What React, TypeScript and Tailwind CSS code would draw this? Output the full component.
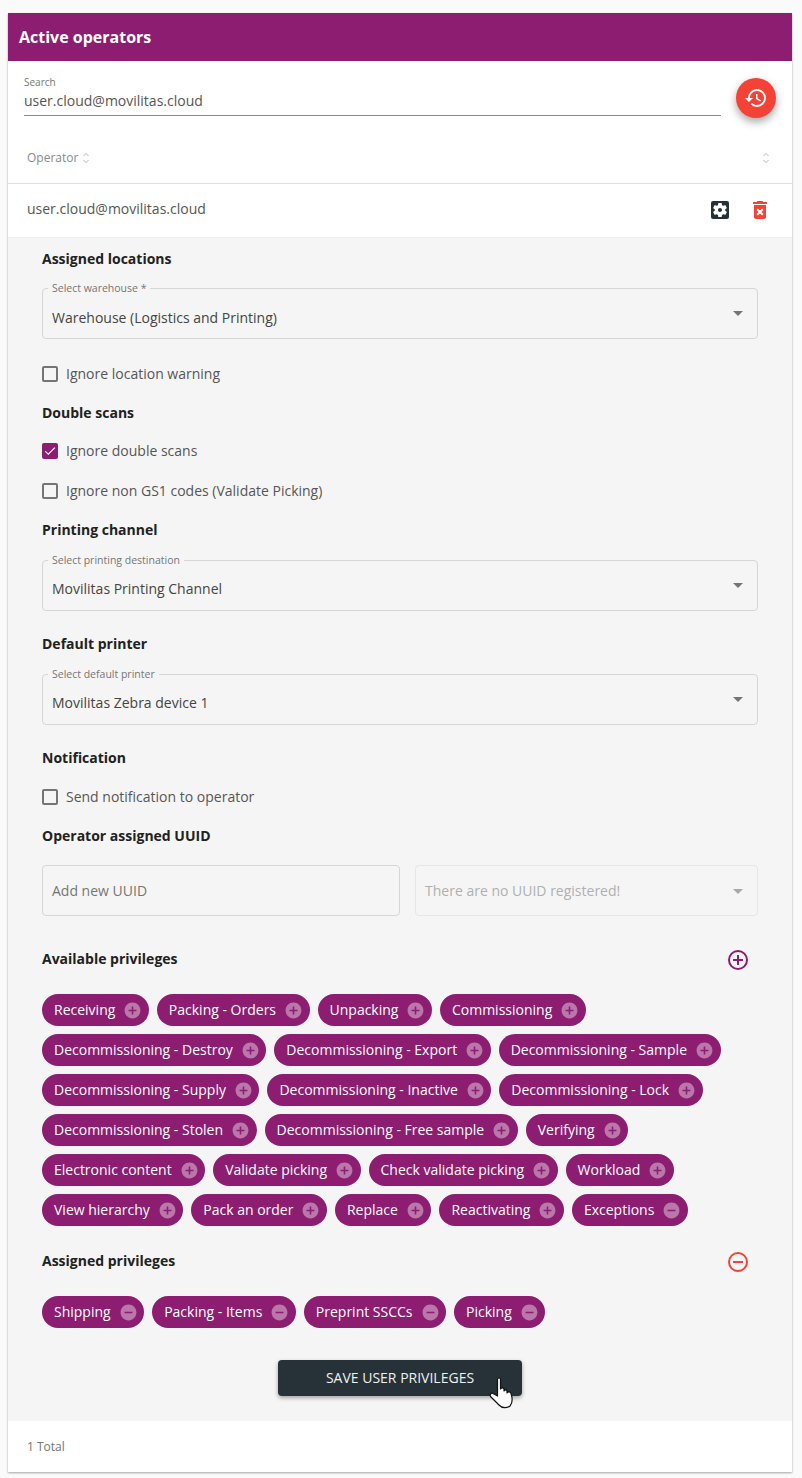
import React from "react";
import { MdAddCircle, MdRemoveCircle, MdSettingsApplications, MdDeleteForever, MdRestore, MdArrowDropDown, MdCheck } from "react-icons/md";

const Heading = ({ children, className = "" }: { children: React.ReactNode; className?: string }) => (
  <h3 className={`text-[14px] leading-[20px] font-bold text-[#212121] ${className}`}>{children}</h3>
);

const Select = ({ label, value, className = "", valueClass = "pt-[7px]" }: { label: string; value: string; className?: string; valueClass?: string }) => (
  <div className={`relative h-[51px] rounded-[4px] border border-[#d6d6d6] flex items-center pl-[9px] pr-[7px] ${className}`}>
    <span className="absolute left-[5px] top-[-8px] bg-[#f5f5f5] px-[4px] text-[10.5px] leading-[14px] text-[#757575]">{label}</span>
    <span className={`flex-1 text-[14px] leading-[20px] text-[#444] ${valueClass}`}>{value}</span>
    <MdArrowDropDown size={24} className="text-[#757575] -mt-[2px]" />
  </div>
);

const Check = ({ label, checked = false, className = "" }: { label: string; checked?: boolean; className?: string }) => (
  <div className={`flex items-center h-[20px] ${className}`}>
    {checked ? (
      <span className="w-[16px] h-[16px] rounded-[2px] bg-[#8c1d71] flex items-center justify-center text-white">
        <MdCheck size={14} />
      </span>
    ) : (
      <span className="w-[16px] h-[16px] rounded-[2px] border-2 border-[#757575]" />
    )}
    <span className="ml-[8px] text-[14px] leading-[20px] text-[#555]">{label}</span>
  </div>
);

const Chip = ({ label, minus = false }: { label: string; minus?: boolean }) => (
  <span className="inline-flex items-center h-[32px] rounded-full bg-[#8c1d71] pl-[12px] pr-[6.5px] text-[14px] text-white">
    <span className="pb-[2px]">{label}</span>
    {minus ? (
      <MdRemoveCircle size={19} className="ml-[8px] text-white/40" />
    ) : (
      <MdAddCircle size={19} className="ml-[8px] text-white/40" />
    )}
  </span>
);

const Sort = () => (
  <svg width="6" height="12" viewBox="0 0 6 12" fill="none" stroke="#b5b5b5" strokeWidth="1">
    <path d="M.5 4 3 1.500 5.500 4M.5 8 3 10.500 5.500 8" />
  </svg>
);

const available = [
  "Receiving", "Packing - Orders", "Unpacking", "Commissioning",
  "Decommissioning - Destroy", "Decommissioning - Export", "Decommissioning - Sample",
  "Decommissioning - Supply", "Decommissioning - Inactive", "Decommissioning - Lock",
  "Decommissioning - Stolen", "Decommissioning - Free sample", "Verifying",
  "Electronic content", "Validate picking", "Check validate picking", "Workload",
  "View hierarchy", "Pack an order", "Replace", "Reactivating", "Exceptions",
];
const assigned = ["Shipping", "Packing - Items", "Preprint SSCCs", "Picking"];

export default function App() {
  return (
    <div className="h-[1478px] bg-[#fafafa] pl-[8px] pr-[10px] pt-[13px] font-['Open_Sans',sans-serif]">
      <div className="bg-white shadow-[0_1px_2px_rgba(0,0,0,0.35)]">
        <header className="h-[48px] bg-[#8c1d71] flex items-center px-[11px] text-[16px] font-bold text-white">Active operators</header>

        <div className="flex items-start pl-[16px] pr-[16px] pt-[14px] h-[71px]">
          <div className="flex-1 border-b border-[#8a8a8a] h-[41px]">
            <div className="text-[10px] leading-[14px] text-[#757575]">Search</div>
            <div className="text-[14px] leading-[20px] text-[#555] mt-[2px]">user.cloud@movilitas.cloud</div>
          </div>
          <button className="w-[40px] h-[40px] ml-[15px] mt-[3px] rounded-full bg-[#f44336] flex items-center justify-center text-white shadow-[0_4px_8px_rgba(0,0,0,0.35)]">
            <MdRestore size={24} />
          </button>
        </div>

        <div className="h-[52px] flex items-center justify-between pl-[19px] pr-[23px] border-b border-[#e0e0e0] text-[12px] text-[#8a8a8a]">
          <span className="flex items-center gap-[5px]">Operator <Sort /></span>
          <Sort />
        </div>

        <div className="h-[53px] flex items-center pl-[19px] pr-[20px] text-[14px] text-[#555]">
          <span className="flex-1 -mt-[5px]">user.cloud@movilitas.cloud</span>
          <MdSettingsApplications size={24} className="text-[#263238] -mt-[1px]" />
          <MdDeleteForever size={24} className="text-[#f44336] ml-[16px] -mt-[1px]" />
        </div>

        <div className="bg-[#f5f5f5] border-t border-[#eeeeee] px-[34px] pt-[11px] h-[1184px]">
          <Heading>Assigned locations</Heading>
          <Select className="mt-[19px]" valueClass="pt-[9px]" label="Select warehouse *" value="Warehouse (Logistics and Printing)" />
          <Check className="mt-[25px]" label="Ignore location warning" />
          <Heading className="mt-[19px]">Double scans</Heading>
          <Check className="mt-[18px]" checked label="Ignore double scans" />
          <Check className="mt-[20px]" label="Ignore non GS1 codes (Validate Picking)" />
          <Heading className="mt-[19px]">Printing channel</Heading>
          <Select className="mt-[20px]" label="Select printing destination" value="Movilitas Printing Channel" />
          <Heading className="mt-[23px]">Default printer</Heading>
          <Select className="mt-[20px]" label="Select default printer" value="Movilitas Zebra device 1" />
          <Heading className="mt-[23px]">Notification</Heading>
          <Check className="mt-[19px]" label="Send notification to operator" />
          <Heading className="mt-[19px]">Operator assigned UUID</Heading>
          <div className="flex gap-[15px] mt-[19px]">
            <div className="w-[358px] h-[51px] rounded-[4px] border border-[#d6d6d6] flex items-center pl-[9px] text-[14px] text-[#757575]">Add new UUID</div>
            <div className="flex-1 h-[51px] rounded-[4px] border border-[#e6e6e6] flex items-center pl-[9px] pr-[7px] text-[14px] text-[#b0b0b0]">
              <span className="flex-1">There are no UUID registered!</span>
              <MdArrowDropDown size={24} className="text-[#a8a8a8]" />
            </div>
          </div>
          <div className="flex items-center justify-between mt-[33px] pr-[9px]">
            <Heading className="mb-[2px]">Available privileges</Heading>
            <svg width="22" height="22" viewBox="0 0 22 22" fill="none" stroke="#8c1d71" strokeWidth="2"><circle cx="11" cy="11" r="9" /><path d="M11 6v10M6 11h10" /></svg>
          </div>
          <div className="flex flex-wrap gap-x-[8px] gap-y-[8px] mt-[23px]">
            {available.map((a) => <Chip key={a} label={a} minus={a === "Exceptions"} />)}
          </div>
          <div className="flex items-center justify-between mt-[25px] pr-[9px]">
            <Heading className="mb-[2px]">Assigned privileges</Heading>
            <svg width="22" height="22" viewBox="0 0 22 22" fill="none" stroke="#f44336" strokeWidth="2"><circle cx="11" cy="11" r="9" /><path d="M6 11h10" /></svg>
          </div>
          <div className="flex flex-wrap gap-[8px] mt-[23px]">
            {assigned.map((a) => <Chip key={a} label={a} minus />)}
          </div>
          <div className="flex justify-center mt-[32px]">
            <button className="relative w-[244px] h-[36px] rounded-[4px] bg-[#263238] pb-[2px] text-[14px] font-medium text-[#f0f0f0] shadow-[0_2px_4px_rgba(0,0,0,0.35)]">
              SAVE USER PRIVILEGES
              <svg className="absolute left-[211px] top-[17px]" width="25" height="32" viewBox="0 0 25 32" fill="#fff" stroke="#111" strokeWidth="1.2" strokeLinejoin="round">
                <path d="M8.500 19V2.500C8.500.5 11.500.5 11.500 2.500V12C12 10.500 15 10.500 15 12V14C15.500 12.500 18 12.500 18 14V16C18.500 14.500 21.500 14.500 22 16.500 23.500 21 23.500 26 21 29 19 31 13 31.500 10 28L2 20C0 18 2 15.500 4 16.500Z" />
              </svg>
            </button>
          </div>
        </div>

        <div className="h-[51px] flex items-center pl-[19px] pt-[1px] text-[12px] text-[#757575]">1 Total</div>
      </div>
    </div>
  );
}
